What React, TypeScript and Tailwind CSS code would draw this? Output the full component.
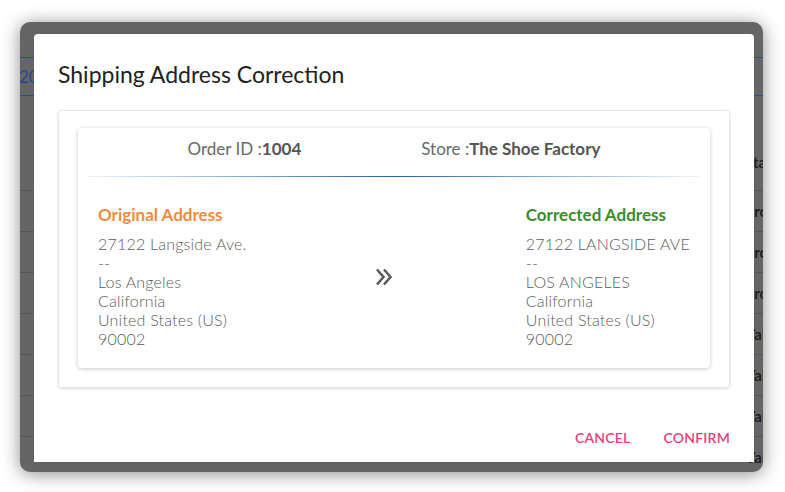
import React from "react";

const font = { fontFamily: "Lato, 'Noto Sans', sans-serif" };

function DoubleChevron() {
  return (
    <svg width="18" height="20" viewBox="0 0 18 20" fill="none" className="shrink-0">
      <path d="M2 2.5 L8.5 10 L2 17.5" stroke="#5a5a5a" strokeWidth="2.6" />
      <path d="M9 2.5 L15.5 10 L9 17.5" stroke="#5a5a5a" strokeWidth="2.6" />
    </svg>
  );
}

function AddressBlock({
  title,
  color,
  lines,
}: {
  title: string;
  color: string;
  lines: string[];
}) {
  return (
    <div>
      <div className={`text-[17px] font-bold leading-[19px] ${color}`}>{title}</div>
      <div className="mt-[10px] text-[16px] font-light leading-[19px] tracking-[0.2px] text-[#5c5c5c]">
        {lines.map((l, i) => (
          <div key={i}>{l}</div>
        ))}
      </div>
    </div>
  );
}

// page behind the dialog, already darkened by the backdrop
function BackgroundPage() {
  const rows = ["Processed", "Processed", "Processed", "Valid", "Valid", "Valid", "Valid"];
  return (
    <div className="absolute inset-0">
      <div className="mt-[35px] h-[39px] border-y border-[#2d4c98] flex items-center">
        <span className="ml-[-1px] text-[17px] text-[#27478f]">2023</span>
      </div>
      <div className="mt-[39px] h-[56px] border-b border-[#565656] flex items-center">
        <span className="ml-[725px] text-[15px] font-bold text-[#202020]">Status</span>
      </div>
      {rows.map((r, i) => (
        <div key={i} className="h-[41px] border-b border-[#565656] flex items-center">
          <span className="ml-[725px] text-[15px] font-bold text-[#202020]">{r}</span>
        </div>
      ))}
    </div>
  );
}

export default function App() {
  return (
    <div className="w-[785px] h-[492px] bg-white pl-[20px] pt-[22px]" style={font}>
      <div className="relative w-[743px] h-[450px] rounded-[10px] overflow-hidden bg-[#656565] shadow-[0_2px_18px_rgba(0,0,0,0.45)]">
        <BackgroundPage />
        <div className="absolute left-[14px] top-[12px] w-[720px] h-[428px] bg-white rounded-t-[4px] flex flex-col">
          <div className="pt-[24px] px-[24px] text-[23px] leading-[32px] text-[#222]">
            Shipping Address Correction
          </div>

          <div className="mx-[24px] mt-[20px] h-[278px] rounded-[4px] border border-[#e6e6e6] shadow-[0_1px_3px_rgba(0,0,0,0.15)] pt-[17px] px-[19px]">
            <div className="h-[240px] rounded-[4px] bg-white shadow-[0_1px_4px_rgba(0,0,0,0.22)]">
              <div className="flex justify-center gap-[120px] pt-[11px] text-[17px] leading-[20px] text-[#6a6a6a]">
                <div>
                  Order ID :<span className="font-bold text-[#555]">1004</span>
                </div>
                <div>
                  Store :<span className="font-bold text-[#555]">The Shoe Factory</span>
                </div>
              </div>
              <div className="mx-[10px] mt-[17px] h-px bg-[linear-gradient(to_right,rgba(31,101,177,0.08),#1f65b1_50%,rgba(31,101,177,0.08))]" />
              <div className="flex items-center px-[20px] pt-[28px]">
                <div className="flex-1">
                  <AddressBlock
                    title="Original Address"
                    color="text-[#f08b3f]"
                    lines={[
                      "27122 Langside Ave.",
                      "--",
                      "Los Angeles",
                      "California",
                      "United States (US)",
                      "90002",
                    ]}
                  />
                </div>
                <div className="mr-[20px]">
                  <DoubleChevron />
                </div>
                <div className="flex-1 flex justify-end">
                  <AddressBlock
                    title="Corrected Address"
                    color="text-[#3b8c2c]"
                    lines={[
                      "27122 LANGSIDE AVE",
                      "--",
                      "LOS ANGELES",
                      "California",
                      "United States (US)",
                      "90002",
                    ]}
                  />
                </div>
              </div>
            </div>
          </div>

          <div className="mt-auto mb-[16px] mr-[24px] flex justify-end gap-[33px] text-[14px] font-semibold tracking-[0.2px] text-[#e8407c]">
            <button className="leading-[16px]">CANCEL</button>
            <button className="leading-[16px]">CONFIRM</button>
          </div>
        </div>
      </div>
    </div>
  );
}
